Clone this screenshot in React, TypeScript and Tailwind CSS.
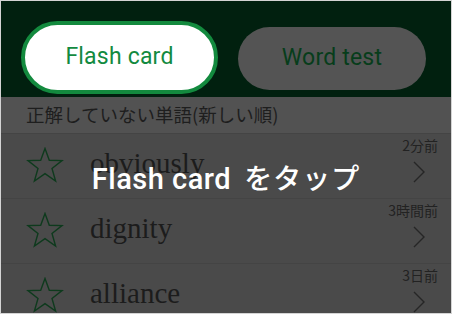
import React from "react";

const Star = () => (
  <svg width="38" height="36" viewBox="0 0 38 36" className="shrink-0">
    <polygon
      points="19,1.5 23.3,13.3 36,13.6 26,21.4 29.6,34 19,26.6 8.4,34 12,21.4 2,13.6 14.7,13.3"
      fill="none"
      stroke="#0e3a1d"
      strokeWidth="1.4"
      strokeLinejoin="miter"
    />
  </svg>
);

const Chevron = () => (
  <svg width="14" height="22" viewBox="0 0 14 22">
    <polyline points="2,1 12,11 2,21" fill="none" stroke="#262626" strokeWidth="1.4" />
  </svg>
);

const rows = [
  { word: "obviously", time: "2分前" },
  { word: "dignity", time: "3時間前" },
  { word: "alliance", time: "3日前" },
];

export default function App() {
  return (
    <div
      className="relative w-[452px] h-[314px] overflow-hidden border border-[#d4d4d4] bg-[#4a4a4a]"
      style={{ fontFamily: "Roboto, 'Noto Sans CJK JP', sans-serif" }}
    >
      <div className="flex h-[96px] bg-[#01200f] items-start">
        <div className="ml-[20px] mt-[20px] w-[197px] h-[73px] rounded-full border-[4px] border-[#138a3e] bg-white flex items-center justify-center">
          <span className="text-[23px] text-[#138a40] tracking-[0.2px]">Flash card</span>
        </div>
        <div className="ml-[20px] mt-[26px] w-[188px] h-[63px] rounded-full bg-[#545454] flex items-center justify-center">
          <span className="text-[23px] text-[#073d1b] tracking-[0.2px]">Word test</span>
        </div>
      </div>
      <div className="h-[36px] bg-[#525252] flex items-center pl-[25px]">
        <span className="text-[18.5px] text-[#1e1e1e]" style={{ fontFamily: "'Noto Sans CJK JP', sans-serif" }}>
          正解していない単語(新しい順)
        </span>
      </div>
      {rows.map((r) => (
        <div key={r.word} className="relative h-[65px] border-t border-[#444444] flex items-center">
          <div className="ml-[25px] mt-[-2px]">
            <Star />
          </div>
          <span
            className="ml-[26px] text-[29px] text-[#1c1c1c] mt-[-4px]"
            style={{ fontFamily: "'Liberation Serif', 'DejaVu Serif', serif" }}
          >
            {r.word}
          </span>
          <span
            className="absolute right-[13px] top-[1px] text-[14px] text-[#222222]"
            style={{ fontFamily: "'Noto Sans CJK JP', sans-serif" }}
          >
            {r.time}
          </span>
          <div className="absolute right-[25px] top-[27px]">
            <Chevron />
          </div>
        </div>
      ))}
      <div className="absolute left-0 right-0 top-[156px] flex justify-center">
        <span className="text-[29px] text-white font-medium leading-[40px]">
          <span style={{ fontFamily: "Roboto, sans-serif" }} className="tracking-[0.5px]">Flash card</span>
          <span style={{ fontFamily: "'Noto Sans CJK JP', sans-serif" }} className="ml-[13px] text-[28px] tracking-[1px]">
            をタップ
          </span>
        </span>
      </div>
    </div>
  );
}
